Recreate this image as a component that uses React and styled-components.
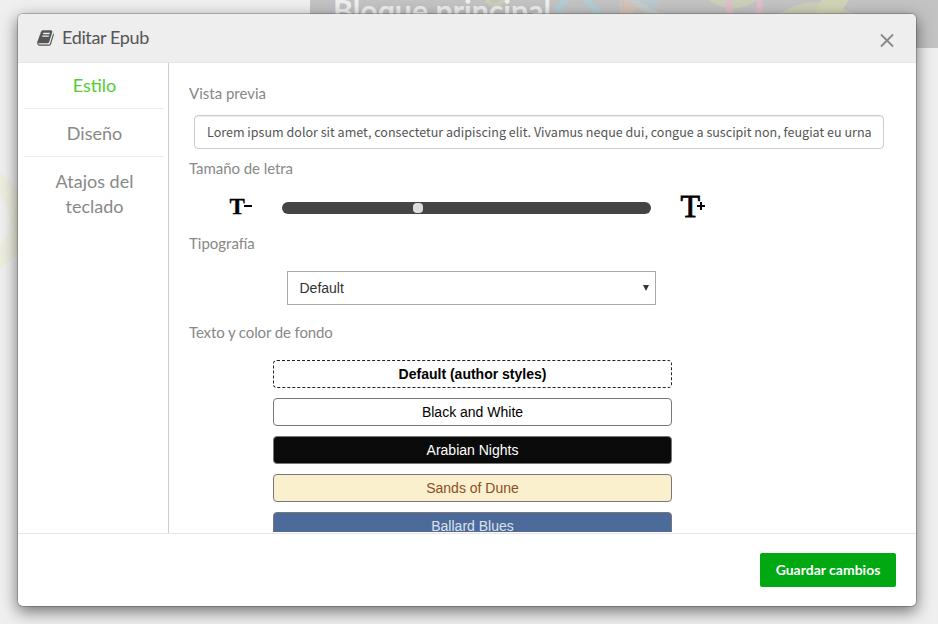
import React from "react";
import styled, { createGlobalStyle } from "styled-components";

const Global = createGlobalStyle`
  * { box-sizing: border-box; }
  html, body { margin: 0; height: 100%; overflow: hidden; }
  body { background: #eee; font-family: Lato, sans-serif; color: #888; }
`;

const Page = styled.div`
  position: relative;
  width: 938px;
  height: 624px;
  overflow: hidden;
  background: #efefef;
  display: flex;
  justify-content: center;
  align-items: flex-start;
  padding: 13px 4px 0 0;
`;
const Decoration = styled.svg`
  position: absolute;
  inset: 0;
`;
const BannerTitle = styled.div`
  position: absolute;
  left: 333px;
  top: -8px;
  font: bold 30.3px/36px Lato, sans-serif;
  color: #efefef;
  white-space: nowrap;
`;
const Modal = styled.section`
  position: relative;
  width: 900px;
  height: 594px;
  display: flex;
  flex-direction: column;
  background: #fff;
  background-clip: padding-box;
  border: 1px solid rgba(0, 0, 0, 0.2);
  border-radius: 6px;
  box-shadow: 0 5px 15px rgba(0, 0, 0, 0.5);
  overflow: hidden;
`;
const Header = styled.header`
  flex: none;
  height: 49px;
  display: flex;
  align-items: center;
  padding: 0 21px 0 19px;
  background: #eee;
  border-bottom: 1px solid #e5e5e5;
`;
const BookIcon = styled.svg`
  width: 17px;
  height: 18px;
  margin-right: 8px;
  fill: #555;
`;
const Title = styled.h4`
  flex: 1;
  margin: 0;
  padding-bottom: 2px;
  font: 400 18px/26px Lato, sans-serif;
  letter-spacing: -0.36px;
  color: #555;
`;
const Close = styled.button`
  display: flex;
  padding: 0;
  margin-top: 5px;
  border: 0;
  background: none;
`;
const Body = styled.div`
  flex: none;
  height: 470px;
  display: flex;
`;
const Sidebar = styled.nav`
  width: 151px;
  padding: 0 4px 0 6px;
  border-right: 1px solid #ccc;
`;
const Tab = styled.div`
  padding: ${(p) => (p.$last ? "12px" : p.$first ? "10px" : "11px")} 19px 10px 20px;
  border-bottom: ${(p) => (p.$last ? "0" : "1px solid #eee")};
  text-align: center;
  font-size: 18px;
  line-height: ${(p) => (p.$last || p.$first ? "25px" : "26px")};
  color: ${(p) => (p.$active ? "#5c3" : "#888")};
`;
const Content = styled.div`
  flex: 1;
  height: 469px;
  overflow: hidden;
  padding: 20px 32px 0 20px;
`;
const Label = styled.div`
  height: 20px;
  font-size: 15px;
  line-height: 20px;
  letter-spacing: ${(p) => p.$track || 0}px;
  margin-top: ${(p) => p.$gap || 0}px;
`;
const Preview = styled.div`
  height: 34px;
  margin: 12px 0 0 5px;
  padding: 0 11px 0 12px;
  border: 1px solid #ccc;
  border-radius: 4px;
  box-shadow: inset 0 1px 1px rgba(0, 0, 0, 0.075);
  font: 400 12.55px/32px "Noto Sans CJK SC", sans-serif;
  color: #555;
`;
const PreviewText = styled.div`
  height: 32px;
  overflow: hidden;
  white-space: nowrap;
`;
const SizeRow = styled.div`
  height: 36px;
  margin-top: 10px;
  padding-left: 37px;
  display: flex;
  align-items: center;
`;
const SizeIcon = styled.svg`
  width: 32px;
  height: 34px;
`;
const Track = styled.div`
  width: 369px;
  height: 12px;
  margin: 3px 26px 0 24px;
  padding: 0 0 0 131px;
  display: flex;
  align-items: center;
  border-radius: 6px;
  background: #444;
`;
const Thumb = styled.div`
  width: 10px;
  height: 10px;
  border-radius: 4px;
  background: #ddd;
`;
const Select = styled.div`
  width: 369px;
  height: 34px;
  margin: 18px 0 0 98px;
  padding: 0 6px 0 11.5px;
  display: flex;
  align-items: center;
  justify-content: space-between;
  border: 1px solid #a9a9a9;
  font: 14px/20px "Liberation Sans", sans-serif;
  color: #333;
`;
const Themes = styled.div`
  width: 399px;
  margin: 18px 0 0 84px;
  display: flex;
  flex-direction: column;
  gap: 10px;
`;
const Theme = styled.button`
  flex: none;
  height: 28px;
  padding: 0;
  border: 1px ${(p) => (p.$dashed ? "dashed #222" : "solid #777")};
  border-radius: 4px;
  background: ${(p) => p.$bg};
  color: ${(p) => p.$fg};
  font: ${(p) => (p.$dashed ? 700 : 400)} 14px/20px "Liberation Sans", sans-serif;
`;
const Footer = styled.footer`
  flex: 1;
  display: flex;
  justify-content: flex-end;
  align-items: flex-start;
  padding: 19px 20px;
  border-top: 1px solid #e5e5e5;
`;
const Save = styled.button`
  width: 136px;
  height: 34px;
  padding: 0;
  border: 0;
  border-radius: 2px;
  background: #00a912;
  color: #fff;
  font: 700 14px/20px Lato, sans-serif;
`;

const THEMES = [
  { name: "Default (author styles)", bg: "#fff", fg: "#000", dashed: true },
  { name: "Black and White", bg: "#fff", fg: "#000" },
  { name: "Arabian Nights", bg: "#0b0b0b", fg: "#fff" },
  { name: "Sands of Dune", bg: "#faf0cd", fg: "#8a4f26" },
  { name: "Ballard Blues", bg: "#4c6b9a", fg: "#dde2ea" },
];

export default function App() {
  return (
    <Page>
      <Global />
      <Decoration width="938" height="624" viewBox="0 0 938 624" fill="none">
        <rect x="310" width="628" height="48" fill="#c3c3c3" />
        <circle cx="-27" cy="221" r="45.500" stroke="#ecedde" strokeWidth="18" />
        <circle cx="495" cy="-5" r="9.500" stroke="#cdceb4" strokeWidth="4" />
        <path d="M572 -6 L558 8 L562 16 M582 -6 L600 16" stroke="#b5ccd2" strokeWidth="7" />
        <path d="M622 -2 Q620 7 623 15" stroke="#d5c4b8" strokeWidth="3" />
        <path d="M624 0 L643 0 L661 14 L647 14 L637 8 L630 14 L624 14Z" fill="#d5c4b8" />
        <path d="M627 0 L660 0 L651 14 Z" fill="#bac8d0" />
        <path d="M643 14 L651 14 L647 9Z" fill="#c3c3c3" />
        <path d="M627 0 L638 0 L660 14 L648 14Z" fill="#c5cccb" />
        <path d="M708 0 Q734 17 758 0Z" fill="#cdcfb9" />
        <path d="M732 -3 Q725 5 731 14 M757 -3 Q763 5 757 14" stroke="#dfbfcb" strokeWidth="6" />
        <path d="M779 14 Q815 -10 853 14Z" fill="#cdcfb9" />
        <path d="M816 14 Q817 6 822 0 L849 0 L840 14Z" fill="#d1d4b7" />
      </Decoration>
      <BannerTitle>Bloque principal</BannerTitle>
      <Modal>
        <Header>
          <BookIcon viewBox="0 0 1664 1792">
            <path d="M1639 478q40 57 18 129l-275 906q-19 64-76.500 107.500t-122.500 43.500h-923q-77 0-148.500-53.500t-99.500-131.500q-24-67-2-127 0-4 3-27t4-37q1-8-3-21.500t-3-19.500q2-11 8-21t16.500-23.500 16.500-23.500q23-38 45-91.500t30-91.500q3-10 .5-30t-.5-28q3-11 17-28t17-23q21-36 42-92t25-90q1-9-2.500-32t.5-28q4-13 22-30.500t22-22.500q19-26 42.500-84.500t27.500-96.500q1-8-3-25.500t-2-26.500q2-8 9-18t18-23 17-21q8-12 16.500-30.500t15-35 16-36 19.500-32 26.500-23.500 36-11.500 47.500 5.500l-1 3q38-9 51-9h761q74 0 114 56t18 130l-274 906q-36 119-71.500 153.500t-128.500 34.500h-869q-27 0-38 15-11 16-1 43 24 70 144 70h923q29 0 56-15.500t35-41.500l300-987q7-22 5-57 38 15 59 43zm-1064 2q-4 13 2 22.500t20 9.500h608q13 0 25.500-9.500t16.500-22.500l21-64q4-13-2-22.500t-20-9.500h-608q-13 0-25.500 9.500t-16.500 22.500zm-83 256q-4 13 2 22.500t20 9.500h608q13 0 25.500-9.500t16.500-22.500l21-64q4-13-2-22.500t-20-9.500h-608q-13 0-25.500 9.500t-16.500 22.500z" />
          </BookIcon>
          <Title>Editar Epub</Title>
          <Close aria-label="Cerrar">
            <svg width="16" height="16" viewBox="0 0 16 16" stroke="#888" strokeWidth="1.800">
              <path d="M2 1.500 L14 13.500 M14 1.500 L2 13.500" />
            </svg>
          </Close>
        </Header>
        <Body>
          <Sidebar>
            <Tab $first $active>Estilo</Tab>
            <Tab>Diseño</Tab>
            <Tab $last>Atajos del teclado</Tab>
          </Sidebar>
          <Content>
            <Label>Vista previa</Label>
            <Preview>
              <PreviewText>
                Lorem ipsum dolor sit amet, consectetur adipiscing elit. Vivamus neque dui, congue a suscipit non, feugiat eu urna
              </PreviewText>
            </Preview>
            <Label $gap={9} $track={-0.06}>Tamaño de letra</Label>
            <SizeRow>
              <SizeIcon viewBox="0 0 32 34">
                <text x="3.500" y="24.500" fontFamily="Liberation Serif, serif" fontWeight="700" fontSize="23" stroke="#000" strokeWidth=".3">T</text>
                <rect x="18" y="16" width="8" height="2" />
              </SizeIcon>
              <Track><Thumb /></Track>
              <SizeIcon viewBox="0 0 32 34">
                <text x="3.500" y="27.500" fontFamily="Liberation Serif, serif" fontSize="32" stroke="#000" strokeWidth=".8">T</text>
                <path d="M20 17h8M24 13v8" stroke="#000" strokeWidth="2" />
              </SizeIcon>
            </SizeRow>
            <Label $gap={9}>Tipografía</Label>
            <Select>
              <span>Default</span>
              <svg width="6" height="6" viewBox="0 0 6 6"><path d="M0 0h6L3 6Z" fill="#333" /></svg>
            </Select>
            <Label $gap={17} $track={-0.12}>Texto y color de fondo</Label>
            <Themes>
              {THEMES.map((t) => (
                <Theme key={t.name} $bg={t.bg} $fg={t.fg} $dashed={t.dashed}>{t.name}</Theme>
              ))}
            </Themes>
          </Content>
        </Body>
        <Footer><Save>Guardar cambios</Save></Footer>
      </Modal>
    </Page>
  );
}
